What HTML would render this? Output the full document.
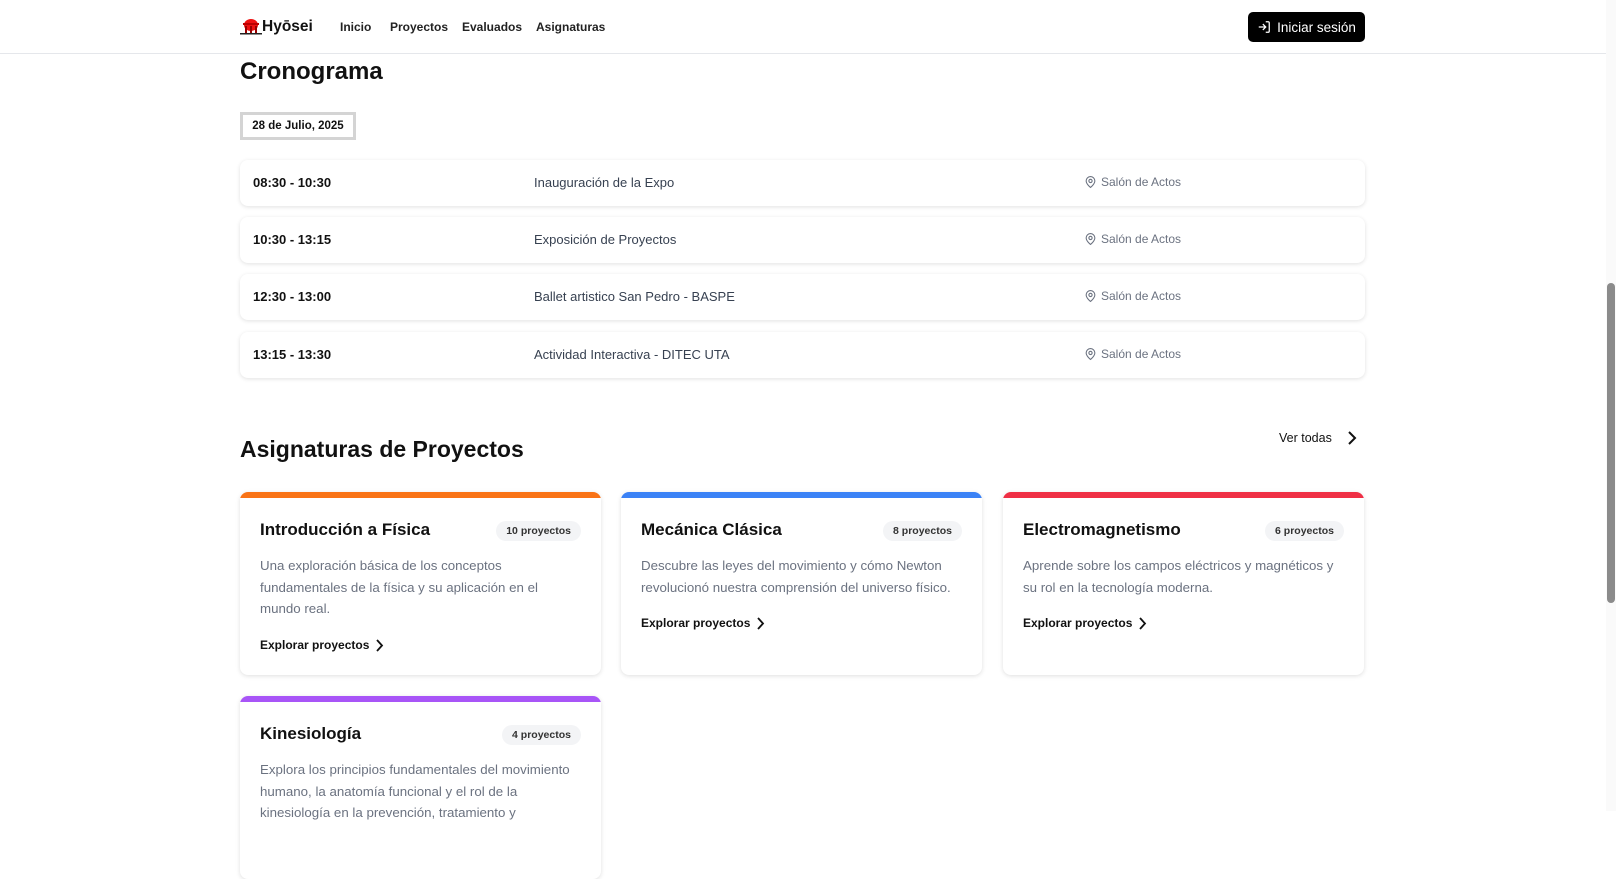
<!DOCTYPE html>
<html><head><meta charset="utf-8"><style>
*{box-sizing:border-box;margin:0;padding:0}
body{width:1616px;height:811px;overflow:hidden;background:#fff;font-family:"Liberation Sans",sans-serif;color:#111;position:relative}
.hdr{position:absolute;left:0;top:0;width:1606px;height:54px;border-bottom:1px solid #e5e7eb;background:#fff}
.logo{position:absolute;left:240px;top:18px;font-weight:bold;font-size:15.5px;display:flex;align-items:center}
.nav{position:absolute;top:20px;font-size:12px;font-weight:600;color:#222}
.btn{position:absolute;left:1248px;top:12px;width:117px;height:30px;background:#000;color:#fff;border-radius:5px;font-size:13.5px;display:flex;align-items:center;justify-content:center;gap:6px}
h1{position:absolute;left:240px;font-weight:bold;color:#111}
.date{position:absolute;left:240px;top:112px;width:116px;height:28px;border:3px solid #d4d4d4;font-size:11.5px;font-weight:bold;display:flex;align-items:center;justify-content:center}
.row{position:absolute;left:240px;width:1125px;height:46px;border-radius:8px;box-shadow:0 1px 4px rgba(0,0,0,.12);font-size:13px}
.row span{position:absolute;top:15px}
.t{left:13px;font-weight:bold;color:#111}
.e{left:294px;color:#374151}
.l{left:844px;color:#6b7280;font-size:12px;display:flex;align-items:center;gap:4px;top:15px}
.card{position:absolute;width:361px;height:183px;border-radius:8px;box-shadow:0 1px 5px rgba(0,0,0,.13);overflow:hidden;background:#fff}
.bar{height:6px}
.card h3{position:absolute;left:20px;top:28px;font-size:17px;font-weight:bold}
.badge{position:absolute;right:20px;top:29px;background:#f3f4f6;border-radius:10px;font-size:10.5px;font-weight:bold;padding:4px 10px;color:#333}
.card p{position:absolute;left:20px;top:63px;width:315px;font-size:13.3px;line-height:21.5px;color:#6b7280}
.ex{position:absolute;left:20px;font-size:12px;font-weight:bold;display:flex;align-items:center;gap:6px}
.sb{position:absolute;left:1606px;top:0;width:10px;height:811px;background:#fafafa}
.th{position:absolute;left:1607px;top:283px;width:8px;height:320px;background:#8b8b8b;border-radius:4px}
</style></head><body>
<div class="hdr">
<div class="logo"><svg width="22" height="16" viewBox="0 0 22 16"><ellipse cx="11" cy="6" rx="7" ry="6" fill="#e11"/><rect x="3" y="4" width="16" height="2" fill="#b00"/><rect x="5" y="7" width="2" height="7" fill="#900"/><rect x="10" y="7" width="2" height="7" fill="#900"/><rect x="15" y="7" width="2" height="7" fill="#900"/><rect x="0" y="14" width="22" height="1.5" fill="#222"/></svg>Hyōsei</div>
<div class="nav" style="left:340px">Inicio</div>
<div class="nav" style="left:390px">Proyectos</div>
<div class="nav" style="left:462px">Evaluados</div>
<div class="nav" style="left:536px">Asignaturas</div>
<div class="btn"><svg width="14" height="14" viewBox="0 0 24 24" fill="none" stroke="#fff" stroke-width="2.2"><path d="M15 3h4a2 2 0 0 1 2 2v14a2 2 0 0 1-2 2h-4M10 17l5-5-5-5M15 12H3"/></svg>Iniciar sesión</div>
</div>
<h1 style="top:58px;font-size:24px">Cronograma</h1>
<div class="date">28 de Julio, 2025</div>
<div class="row" style="top:160px"><span class="t">08:30 - 10:30</span><span class="e">Inauguración de la Expo</span><span class="l"><svg width="13" height="14" viewBox="0 0 24 24" fill="none" stroke="#6b7280" stroke-width="2"><path d="M20 10c0 6-8 12-8 12s-8-6-8-12a8 8 0 0 1 16 0z"/><circle cx="12" cy="10" r="3"/></svg>Salón de Actos</span></div>
<div class="row" style="top:217px"><span class="t">10:30 - 13:15</span><span class="e">Exposición de Proyectos</span><span class="l"><svg width="13" height="14" viewBox="0 0 24 24" fill="none" stroke="#6b7280" stroke-width="2"><path d="M20 10c0 6-8 12-8 12s-8-6-8-12a8 8 0 0 1 16 0z"/><circle cx="12" cy="10" r="3"/></svg>Salón de Actos</span></div>
<div class="row" style="top:274px"><span class="t">12:30 - 13:00</span><span class="e">Ballet artistico San Pedro - BASPE</span><span class="l"><svg width="13" height="14" viewBox="0 0 24 24" fill="none" stroke="#6b7280" stroke-width="2"><path d="M20 10c0 6-8 12-8 12s-8-6-8-12a8 8 0 0 1 16 0z"/><circle cx="12" cy="10" r="3"/></svg>Salón de Actos</span></div>
<div class="row" style="top:332px"><span class="t">13:15 - 13:30</span><span class="e">Actividad Interactiva - DITEC UTA</span><span class="l"><svg width="13" height="14" viewBox="0 0 24 24" fill="none" stroke="#6b7280" stroke-width="2"><path d="M20 10c0 6-8 12-8 12s-8-6-8-12a8 8 0 0 1 16 0z"/><circle cx="12" cy="10" r="3"/></svg>Salón de Actos</span></div>
<h1 style="top:436px;font-size:23px">Asignaturas de Proyectos</h1>
<div style="position:absolute;left:1279px;top:431px;font-size:12.5px;display:flex;align-items:center;gap:14px">Ver todas <svg width="12" height="14" viewBox="0 0 12 14" fill="none" stroke="#111" stroke-width="2"><path d="M3 1l6 6-6 6"/></svg></div>

<div class="card" style="left:240px;top:492px"><div class="bar" style="background:#f97316"></div><h3>Introducción a Física</h3><span class="badge">10 proyectos</span><p>Una exploración básica de los conceptos fundamentales de la física y su aplicación en el mundo real.</p><div class="ex" style="top:146px">Explorar proyectos <svg width="9" height="13" viewBox="0 0 9 13" fill="none" stroke="#111" stroke-width="1.8"><path d="M2 1l5 5.5L2 12"/></svg></div></div>
<div class="card" style="left:621px;top:492px"><div class="bar" style="background:#3b82f6"></div><h3>Mecánica Clásica</h3><span class="badge">8 proyectos</span><p>Descubre las leyes del movimiento y cómo Newton revolucionó nuestra comprensión del universo físico.</p><div class="ex" style="top:124px">Explorar proyectos <svg width="9" height="13" viewBox="0 0 9 13" fill="none" stroke="#111" stroke-width="1.8"><path d="M2 1l5 5.5L2 12"/></svg></div></div>
<div class="card" style="left:1003px;top:492px"><div class="bar" style="background:#ef2f45"></div><h3>Electromagnetismo</h3><span class="badge">6 proyectos</span><p>Aprende sobre los campos eléctricos y magnéticos y su rol en la tecnología moderna.</p><div class="ex" style="top:124px">Explorar proyectos <svg width="9" height="13" viewBox="0 0 9 13" fill="none" stroke="#111" stroke-width="1.8"><path d="M2 1l5 5.5L2 12"/></svg></div></div>
<div class="card" style="left:240px;top:696px;height:183px"><div class="bar" style="background:#a855f7"></div><h3>Kinesiología</h3><span class="badge">4 proyectos</span><p>Explora los principios fundamentales del movimiento humano, la anatomía funcional y el rol de la kinesiología en la prevención, tratamiento y</p></div>
<div class="sb"></div><div class="th"></div>
</body></html>
